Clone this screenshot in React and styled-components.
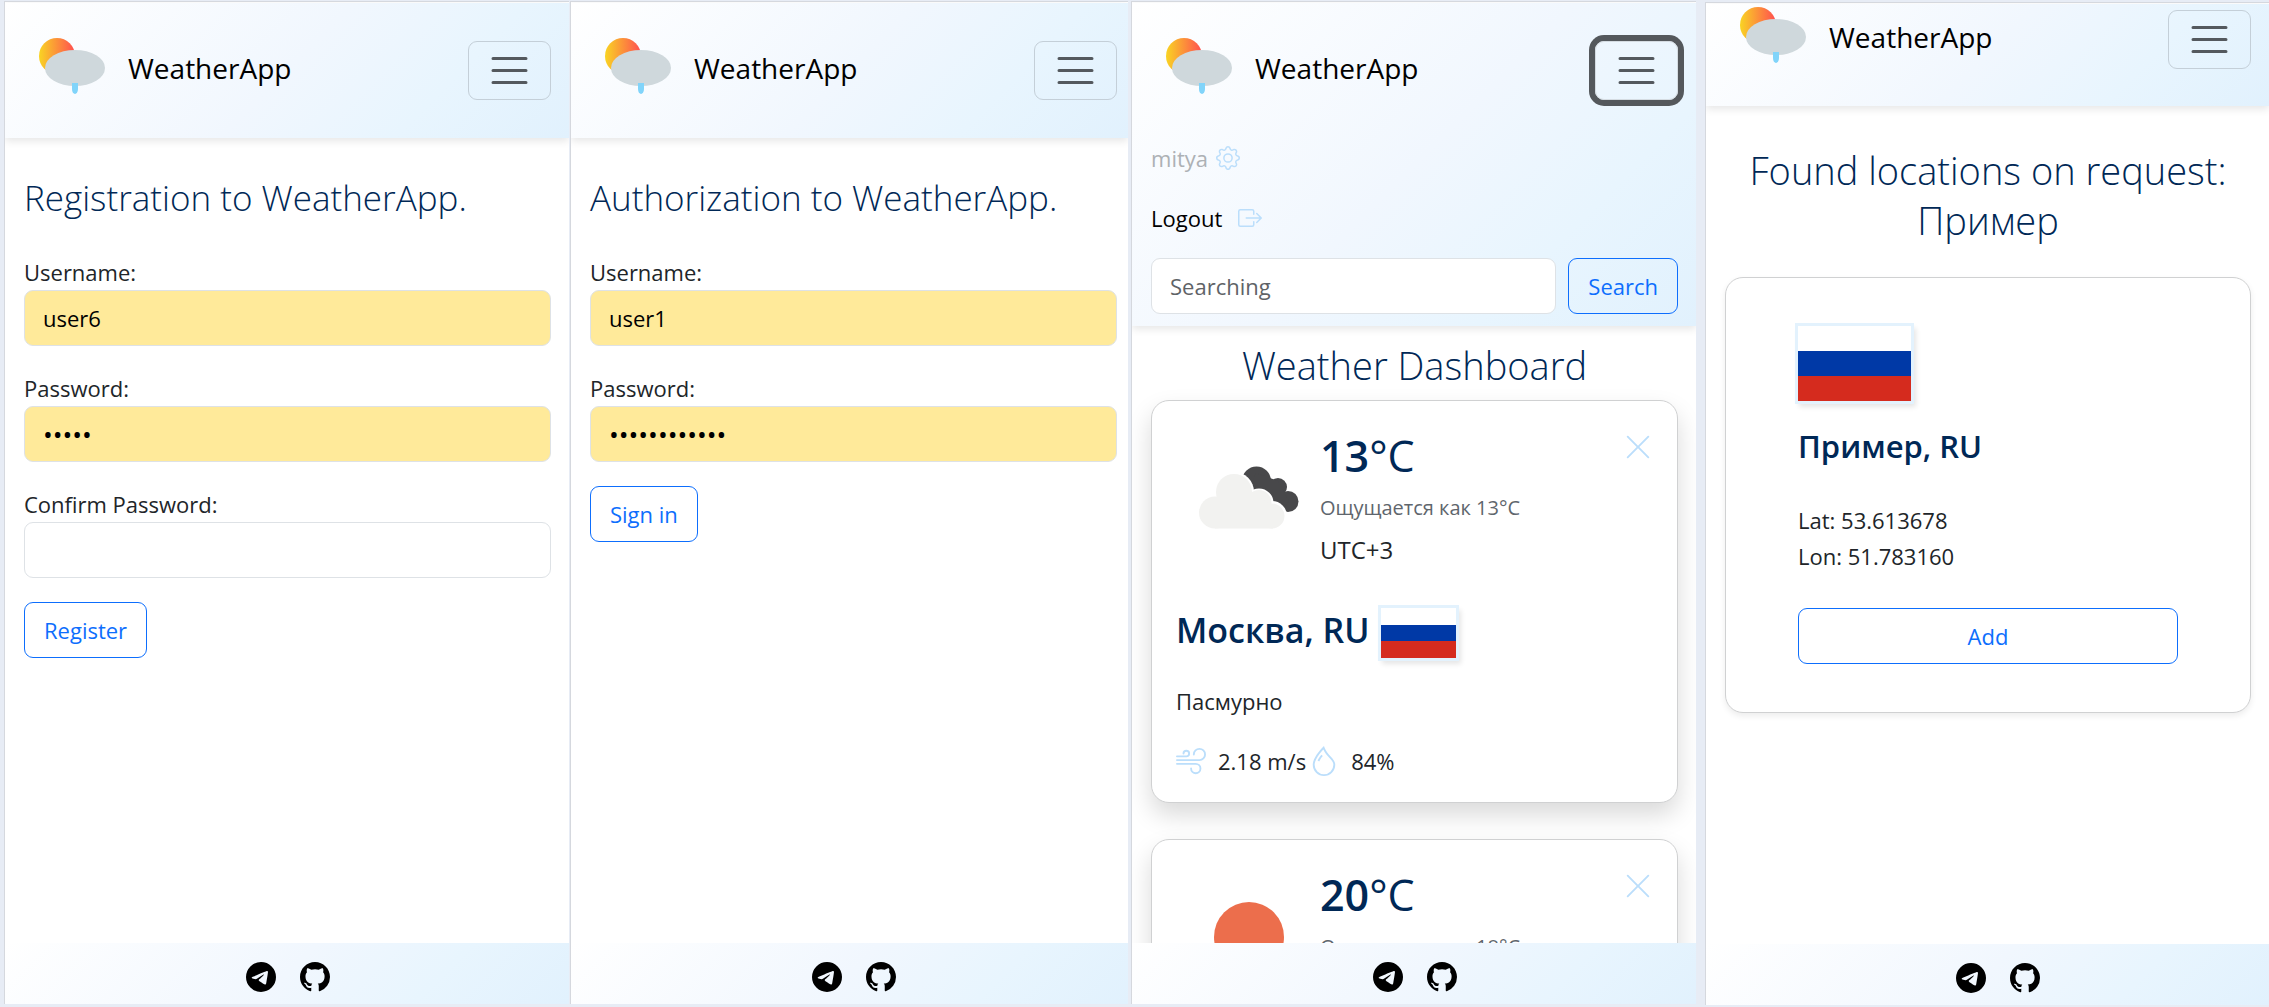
import React from "react";
import styled, { createGlobalStyle, css } from "styled-components";
import { BsGear, BsBoxArrowRight, BsWind, BsDroplet, BsTelegram, BsGithub, BsXLg } from "react-icons/bs";

const Global = createGlobalStyle`
  *, *::before, *::after { box-sizing: border-box; }
  body {
    margin: 0;
    background: #e7ecf5;
    color: #212529;
    font-family: "Open Sans", "Noto Sans", sans-serif;
    font-size: 22px;
    line-height: 36px;
  }
  h1, h2, p { margin: 0; }
  button, input { font: inherit; }
`;

const navy = "#002856";
const pale = "#bbdefb";
const sky = "linear-gradient(135deg, #ffffff 0%, #f1f7fe 50%, #e8f5fe 75%, #e1f1fd 100%)";

const Board = styled.main`
  display: flex;
  height: 100vh;
  padding: 1px 0 3px 4px;
  overflow: hidden;
`;

const Screen = styled.section`
  flex: ${(p) => p.$grow} 1 0;
  min-width: 0;
  margin-left: ${(p) => p.$gap || 0}px;
  margin-top: ${(p) => (p.$low ? 1 : 0)}px;
  margin-bottom: ${(p) => (p.$low ? -1 : 0)}px;
  padding-top: 1px;
  display: flex;
  flex-direction: column;
  overflow: hidden;
  background: #fff;
  border: solid #d5d8de;
  border-width: 1px 0 0 1px;
  --edge: ${(p) => p.$edge || 18}px;
`;

const Header = styled.header`
  position: relative;
  flex: none;
  background: ${sky};
  box-shadow: 0 3px 8px rgba(0, 0, 0, 0.1);
  padding: ${(p) => (p.$scrolled ? 0 : 32)}px var(--edge) 12px 19px;
  min-height: ${(p) => (p.$scrolled ? 102 : 135)}px;
`;

const Bar = styled.div`
  display: flex;
  align-items: center;
  justify-content: space-between;
  height: 71px;
`;

const Brand = styled.a`
  display: flex;
  align-items: center;
  gap: 20px;
  padding-left: 12px;
  color: #000;
  font-size: 28px;
  text-decoration: none;
  span { padding-bottom: 6px; }
`;

const Toggler = styled.button`
  width: 83px;
  height: 59px;
  padding: 0;
  display: grid;
  place-items: center;
  background: transparent;
  border: 1px solid #c4cfd8;
  border-radius: 9px;
  ${(p) => p.$focused && css`
    border-color: #d5dce2;
    box-shadow: 0 0 0 6px #54585c;
  `}
`;

const Menu = styled.nav`
  display: flex;
  flex-direction: column;
  margin-top: 22px;
`;

const MenuLink = styled.a`
  display: flex;
  align-items: center;
  gap: ${(p) => p.$gap}px;
  height: 60px;
  color: ${(p) => (p.$muted ? "#adb1b5" : "#000")};
  text-decoration: none;
  svg { color: ${pale}; }
`;

const SearchForm = styled.form`
  display: flex;
  gap: 12px;
  margin-top: 10px;
`;

const Field = styled.input`
  display: block;
  width: 100%;
  min-width: 0;
  height: 56px;
  padding: 0 18px;
  color: #000;
  background: ${(p) => (p.$filled ? "#ffea9a" : "#fff")};
  border: 1px solid #dee2e6;
  border-radius: 9px;
  outline: 0;
  &[type="password"] { font-size: 26px; }
  &::placeholder { color: #5f6367; opacity: 1; }
`;

const Button = styled.button`
  flex: none;
  width: ${(p) => (p.$block ? "100%" : "auto")};
  height: 56px;
  padding: 0 19px;
  color: #0d6efd;
  background: transparent;
  border: 1px solid #0d6efd;
  border-radius: 9px;
`;

const Body = styled.div`
  flex: 1 1 0;
  min-height: 0;
  overflow: hidden;
  padding: 0 var(--edge) 0 19px;
`;

const Title = styled.h1`
  color: ${navy};
  font-weight: 300;
  font-size: ${(p) => (p.$big ? 38 : 35)}px;
  line-height: 50px;
  text-align: ${(p) => (p.$big ? "center" : "left")};
  padding-top: ${(p) => p.$top}px;
`;

const Form = styled.form`
  padding-top: 31px;
`;

const Group = styled.div`
  margin-bottom: 24px;
  label { display: block; }
`;

const Card = styled.article`
  position: relative;
  border: 1px solid #d0d1d2;
  border-radius: 18px;
  background: #fff;
`;

const Cards = styled.div`
  display: flex;
  flex-direction: column;
  gap: 36px;
  margin: 10px calc(-1 * var(--edge)) 0 -19px;
  padding: 0 var(--edge) 0 19px;
`;

const WeatherCard = styled(Card)`
  height: 403px;
  padding: 22px 24px 0;
  box-shadow: 0 12px 24px rgba(0, 0, 0, 0.15);
`;

const PlaceCard = styled(Card)`
  margin-top: 32px;
  padding: 48px 72px;
  box-shadow: 0 3px 6px rgba(0, 0, 0, 0.075);
`;

const Now = styled.div`
  display: flex;
  height: 150px;
  svg { flex: none; }
`;

const Reading = styled.div`
  flex: 1;
`;

const Temp = styled.p`
  color: ${navy};
  font-size: 43px;
  line-height: 66px;
  b { font-weight: 600; }
`;

const Feels = styled.p`
  color: #5f666d;
  font-size: 20px;
  line-height: 38px;
`;

const Zone = styled.p`
  font-size: 24px;
  line-height: 46px;
`;

const Close = styled.button`
  display: flex;
  width: 30px;
  height: 30px;
  margin-top: 9px;
  padding: 0;
  border: 0;
  background: none;
  color: ${pale};
`;

const City = styled.h2`
  margin-top: 23px;
  color: ${navy};
  font-weight: 600;
  font-size: 31px;
  line-height: 44px;
`;

const CityRow = styled(City)`
  display: flex;
  gap: 11px;
  margin-top: 35px;
  height: 50px;
  font-size: 34px;
`;

const Flag = styled.span`
  display: block;
  flex: none;
  width: ${(p) => p.$w}px;
  height: ${(p) => p.$h}px;
  background: linear-gradient(#fff 33.3%, #0039a6 33.3% 66.6%, #d52b1e 66.6%);
  box-shadow: 0 0 0 3px #e3f2fd, 3px 4px 5px 2px rgba(0, 0, 0, 0.1);
`;

const Sky = styled.p`
  margin-top: 25px;
`;

const Facts = styled.div`
  display: flex;
  align-items: center;
  margin-top: 24px;
  svg { color: ${pale}; }
  span { margin: 0 3px 0 12px; }
`;

const Coords = styled.p`
  margin: 34px 0;
`;

const Footer = styled.footer`
  position: relative;
  flex: none;
  display: flex;
  align-items: center;
  justify-content: center;
  gap: 24px;
  height: 61px;
  padding-top: 6px;
  padding-left: ${(p) => p.$shift || 2}px;
  background: ${sky};
  a { display: flex; color: #000; }
`;

const Logo = ({ id }) => (
  <svg width="72" height="72" viewBox="0 0 72 72" aria-hidden="true">
    <defs>
      <linearGradient id={id}>
        <stop offset="0" stopColor="#f9d423" />
        <stop offset="1" stopColor="#ff4e50" />
      </linearGradient>
    </defs>
    <circle cx="21" cy="21" r="18" fill={`url(#${id})`} />
    <ellipse cx="39" cy="33" rx="30" ry="18" fill="#cfd8dc" />
    <path d="M36 48h6v6a3 5 0 0 1-6 0z" fill="#81d4fa" />
  </svg>
);

const Burger = () => (
  <svg width="45" height="45" viewBox="0 0 30 30" aria-hidden="true">
    <path d="M4 7h22M4 15h22M4 23h22" stroke="#54595e" strokeLinecap="round" strokeWidth="2" />
  </svg>
);

const Clouds = () => (
  <svg width="144" height="150" viewBox="0 0 144 150" aria-hidden="true">
    <g fill="#48484a">
      <circle cx="80.5" cy="58" r="14.5" />
      <circle cx="102" cy="64" r="9" />
      <circle cx="112" cy="78.500" r="10.500" />
      <path d="M70 68l10-18 22 8 11 20-6 9-20-4z" />
    </g>
    <g fill="#fff">
      <circle cx="58" cy="69" r="20" />
      <circle cx="83" cy="80" r="14.5" />
      <circle cx="96" cy="93" r="15" />
    </g>
    <g fill="#f2f2f0">
      <circle cx="39" cy="89.5" r="16" />
      <circle cx="58" cy="69" r="18" />
      <circle cx="83" cy="79.5" r="12.5" />
      <circle cx="96" cy="93" r="12.500" />
      <path d="M39 75l40-4 18 12v22.500H39z" />
    </g>
  </svg>
);

const Sun = () => (
  <svg width="144" height="150" viewBox="0 0 144 150" aria-hidden="true">
    <circle cx="73" cy="75" r="35" fill="#ec6e4c" />
  </svg>
);

const Top = ({ id, scrolled, focused, children }) => (
  <Header $scrolled={scrolled}>
    <Bar>
      <Brand href="#home">
        <Logo id={id} />
        <span>WeatherApp</span>
      </Brand>
      <Toggler type="button" aria-label="Toggle navigation" $focused={focused}>
        <Burger />
      </Toggler>
    </Bar>
    {children}
  </Header>
);

const Bottom = ({ shift }) => (
  <Footer $shift={shift}>
    <a href="#telegram" aria-label="Telegram"><BsTelegram size={30} /></a>
    <a href="#github" aria-label="GitHub"><BsGithub size={30} /></a>
  </Footer>
);

const Entry = ({ id, label, type = "text", value }) => (
  <Group>
    <label htmlFor={id}>{label}</label>
    <Field id={id} type={type} defaultValue={value} $filled={Boolean(value)} />
  </Group>
);

const Weather = ({ icon, temp, feels, children }) => (
  <WeatherCard>
    <Now>
      {icon}
      <Reading>
        <Temp><b>{temp}</b>°C</Temp>
        <Feels>Ощущается как {feels}°C</Feels>
        {children && <Zone>UTC+3</Zone>}
      </Reading>
      <Close type="button" aria-label="Remove"><BsXLg size={30} /></Close>
    </Now>
    {children}
  </WeatherCard>
);

export default function App() {
  return (
    <>
      <Global />
      <Board>
        <Screen $grow={565}>
          <Top id="sun-a" />
          <Body>
            <Title $top={35}>Registration to WeatherApp.</Title>
            <Form>
              <Entry id="reg-user" label="Username:" value="user6" />
              <Entry id="reg-pass" label="Password:" type="password" value="12345" />
              <Entry id="reg-confirm" label="Confirm Password:" type="password" />
              <Button type="button">Register</Button>
            </Form>
          </Body>
          <Bottom />
        </Screen>
        <Screen $grow={558} $gap={1} $edge={11}>
          <Top id="sun-b" />
          <Body>
            <Title $top={35}>Authorization to WeatherApp.</Title>
            <Form>
              <Entry id="auth-user" label="Username:" value="user1" />
              <Entry id="auth-pass" label="Password:" type="password" value="123456789012" />
              <Button type="button">Sign in</Button>
            </Form>
          </Body>
          <Bottom shift={8} />
        </Screen>
        <Screen $grow={565} $gap={3}>
          <Top id="sun-c" focused>
            <Menu>
              <MenuLink href="#profile" $muted $gap={8}>mitya <BsGear size={24} /></MenuLink>
              <MenuLink href="#logout" $gap={16}>Logout <BsBoxArrowRight size={24} /></MenuLink>
              <SearchForm>
                <Field type="search" aria-label="Search location" placeholder="Searching" />
                <Button type="button">Search</Button>
              </SearchForm>
            </Menu>
          </Top>
          <Body>
            <Title $big $top={14}>Weather Dashboard</Title>
            <Cards>
              <Weather icon={<Clouds />} temp="13" feels="13">
                <CityRow>Москва, RU<Flag $w={75} $h={50} role="img" aria-label="Russia" /></CityRow>
                <Sky>Пасмурно</Sky>
                <Facts>
                  <BsWind size={30} /><span>2.18 m/s</span>
                  <BsDroplet size={30} /><span>84%</span>
                </Facts>
              </Weather>
              <Weather icon={<Sun />} temp="20" feels="18" />
            </Cards>
          </Body>
          <Bottom />
        </Screen>
        <Screen $grow={564} $gap={9} $low>
          <Top id="sun-d" scrolled />
          <Body>
            <Title $big $top={39}>Found locations on request: Пример</Title>
            <PlaceCard>
              <Flag $w={113} $h={75} role="img" aria-label="Russia" />
              <City>Пример, RU</City>
              <Coords>Lat: 53.613678<br />Lon: 51.783160</Coords>
              <Button type="button" $block>Add</Button>
            </PlaceCard>
          </Body>
          <Bottom shift={20} />
        </Screen>
      </Board>
    </>
  );
}
